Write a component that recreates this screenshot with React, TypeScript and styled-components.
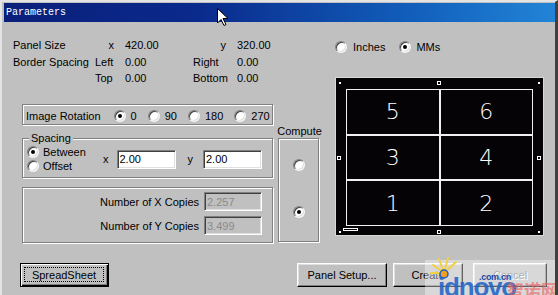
import React from 'react'
import styled, { createGlobalStyle, css } from 'styled-components'

const GlobalStyle = createGlobalStyle`
  html, body {
    margin: 0;
    padding: 0;
    background: #c0c0c0;
  }
  body {
    font-family: "Liberation Sans", Arial, sans-serif;
    font-size: 11px;
    color: #000;
  }
`

const Window = styled.div`
  position: relative;
  width: 558px;
  height: 295px;
  box-sizing: border-box;
  background: #c0c0c0;
  border-top: 2px solid #e4e4e4;
  border-left: 2px solid #e4e4e4;
  border-right: 3px solid #404040;
  overflow: hidden;
`

const TitleBar = styled.div`
  height: 19px;
  margin: 1px 0 0 2px;
  padding-left: 2px;
  display: flex;
  align-items: center;
  background: linear-gradient(to right, #0a1f7a 0%, #0a2a8c 35%, #1260bc 75%, #2284d6 100%);
  color: #fff;
  font-family: "Liberation Mono", "DejaVu Sans Mono", monospace;
  font-size: 10px;
`

const Cursor = styled.svg`
  position: absolute;
  left: 214px;
  top: 5px;
`

const Body = styled.div`
  height: 241px;
  box-sizing: border-box;
  padding: 15px 0 0 11px;
  display: grid;
  grid-template-columns: 307px 209px;
  column-gap: 15px;
  align-items: start;
`

const LeftCol = styled.div`
  display: flex;
  flex-direction: column;
`

const InfoGrid = styled.div`
  display: grid;
  grid-template-columns: 82px 30px 68px 44px 50px;
  grid-auto-rows: 16.5px;
  align-items: center;
`

const Cell = styled.span<{ $right?: boolean }>`
  white-space: nowrap;
  ${p => p.$right && css`
    justify-self: end;
    margin-right: 11px;
  `}
`

const Lower = styled.div`
  display: flex;
  gap: 5px;
  margin: 17.5px 0 0 9px;
`

const Groups = styled.div`
  width: 251px;
  display: flex;
  flex-direction: column;
`

const etched = css`
  box-sizing: border-box;
  border: 1px solid #808080;
  box-shadow: inset 1px 1px 0 #fff, 1px 1px 0 #fff;
`

const RotationGroup = styled.div`
  ${etched};
  height: 21px;
  display: flex;
  align-items: center;
  gap: 11px;
  padding: 2px 0 0 3px;
`

const RotationLabel = styled.span`
  margin-right: 2px;
`

const Group = styled.div<{ $h: number; $mt: number }>`
  ${etched};
  height: ${p => p.$h}px;
  margin-top: ${p => p.$mt}px;
`

const Legend = styled.span`
  display: table;
  margin: -7px 0 0 6px;
  padding: 0 2px;
  background: #c0c0c0;
  line-height: 13px;
`

const SpacingRow = styled.div`
  display: flex;
  align-items: center;
  padding-left: 4px;
`

const RadioStack = styled.div`
  width: 76px;
  display: flex;
  flex-direction: column;
`

const RadioItem = styled.label<{ $gap?: number; $h?: number }>`
  display: flex;
  align-items: center;
  gap: ${p => p.$gap ?? 5}px;
  height: ${p => p.$h ?? 14}px;
  white-space: nowrap;
`

const RadioDot = styled.span<{ $checked?: boolean }>`
  position: relative;
  width: 12px;
  height: 12px;
  flex: none;
  box-sizing: border-box;
  border-radius: 50%;
  border: 1px solid;
  border-color: #808080 #f4f4f4 #f4f4f4 #808080;
  background: #fff;
  box-shadow: inset 1px 1px 0 #404040, inset -1px -1px 0 #dfdfdf;
  ${p => p.$checked && css`
    &::after {
      content: '';
      position: absolute;
      left: 3px;
      top: 3px;
      width: 4px;
      height: 4px;
      border-radius: 50%;
      background: #000;
    }
  `}
`

const AxisLabel = styled.span<{ $ml: number }>`
  margin-left: ${p => p.$ml}px;
`

const Field = styled.input<{ $w: number; $h: number; $ml?: number }>`
  width: ${p => p.$w}px;
  height: ${p => p.$h}px;
  margin: 0 0 0 ${p => p.$ml ?? 0}px;
  box-sizing: border-box;
  padding: 0 0 0 2px;
  border: 1px solid;
  border-color: #808080 #fff #fff #808080;
  box-shadow: inset 1px 1px 0 #404040, inset -1px -1px 0 #dfdfdf;
  background: #fff;
  color: #000;
  font-family: "Liberation Sans", Arial, sans-serif;
  font-size: 11px;
  outline: none;
  &:disabled {
    background: #c0c0c0;
    color: #8a8a8a;
  }
`

const CopiesGrid = styled.div`
  display: grid;
  grid-template-columns: 1fr 58px;
  column-gap: 5px;
  row-gap: 5px;
  align-items: center;
  padding: 4px 10px 0 0;
  justify-items: end;
`

const ComputeCol = styled.div`
  width: 41px;
  margin-top: 21px;
  display: flex;
  flex-direction: column;
  align-items: center;
`

const ComputeLabel = styled.span`
  line-height: 13px;
  margin-left: 2px;
`

const ComputeBox = styled.div`
  ${etched};
  width: 41px;
  height: 104px;
  display: flex;
  flex-direction: column;
  align-items: center;
  gap: 35px;
  padding-top: 20px;
`

const RightCol = styled.div`
  display: flex;
  flex-direction: column;
`

const UnitRow = styled.div`
  height: 20px;
  display: flex;
  align-items: center;
  gap: 14px;
`

const Preview = styled.div`
  position: relative;
  margin-top: 20px;
  width: 209px;
  height: 159px;
  box-sizing: border-box;
  background: #050305;
  border: 1px solid #d8d8d8;
  padding: 11px 10px 9px 10px;
`

const PanelGrid = styled.div`
  width: 100%;
  height: 100%;
  display: grid;
  grid-template-columns: 1fr 1fr;
  grid-template-rows: 1fr 1fr 1fr;
`

const PanelCell = styled.div`
  border: 1px solid #f0f0f0;
  display: flex;
  align-items: center;
  justify-content: center;
  color: #fff;
  font-family: "DejaVu Sans", sans-serif;
  font-weight: 200;
  font-size: 22px;
`

const Handle = styled.span<{ $x: number; $y: number; $hollow?: boolean }>`
  position: absolute;
  left: ${p => p.$x}px;
  top: ${p => p.$y}px;
  box-sizing: border-box;
  ${p => p.$hollow ? css`
    width: 4px;
    height: 4px;
    border: 1px solid #fff;
  ` : css`
    width: 2px;
    height: 2px;
    background: #fff;
  `}
`

const ScaleBar = styled.span`
  position: absolute;
  left: 7px;
  top: 150px;
  width: 15px;
  height: 3px;
  box-sizing: border-box;
  border: 1px solid #fff;
`

const ButtonRow = styled.div`
  display: flex;
  align-items: center;
  padding-left: 18px;
`

const Button = styled.button<{ $w: number; $ml?: number; $default?: boolean; $dim?: boolean }>`
  width: ${p => p.$w}px;
  height: 24px;
  margin-left: ${p => p.$ml ?? 0}px;
  padding: 0;
  box-sizing: border-box;
  background: #c0c0c0;
  font-family: "Liberation Sans", Arial, sans-serif;
  font-size: 11px;
  color: ${p => p.$dim ? '#808080' : '#000'};
  text-shadow: ${p => p.$dim ? '1px 1px 0 #fff' : 'none'};
  display: flex;
  align-items: center;
  justify-content: center;
  ${p => p.$default ? css`
    border: 1px solid #000;
    box-shadow: inset 1px 1px 0 #fff, inset -1px -1px 0 #000, inset -2px -2px 0 #808080;
    padding: 3px 4px 4px 3px;
  ` : css`
    border: 1px solid;
    border-color: #fff #000 #000 #fff;
    box-shadow: inset -1px -1px 0 #808080, inset 1px 1px 0 #dfdfdf;
  `}
`

const FocusRing = styled.span`
  flex: 1;
  align-self: stretch;
  display: flex;
  align-items: center;
  justify-content: center;
  border: 1px dotted #000;
`

const Watermark = styled.div`
  position: absolute;
  left: 423px;
  top: 258px;
  width: 135px;
  height: 37px;
  background: rgba(255, 255, 255, 0.38);
`

const Sun = styled.svg`
  position: absolute;
  left: 2px;
  top: -4px;
`

const Brand = styled.span`
  position: absolute;
  left: 13px;
  top: 14px;
  font-family: "Liberation Sans", Arial, sans-serif;
  font-weight: bold;
  font-size: 26px;
  letter-spacing: -1.2px;
  line-height: 26px;
  color: rgba(30, 100, 200, 0.88);
`

const Domain = styled.span`
  position: absolute;
  left: 54px;
  top: 12px;
  font-family: "Liberation Sans", Arial, sans-serif;
  font-weight: bold;
  font-size: 9px;
  letter-spacing: -0.3px;
  color: #1a48a8;
`

const BrandCn = styled.span`
  position: absolute;
  left: 82px;
  top: 20px;
  font-family: "Noto Sans CJK SC", sans-serif;
  font-weight: bold;
  font-size: 17px;
  line-height: 19px;
  color: rgba(240, 90, 90, 0.62);
`

const panels = ['5', '6', '3', '4', '1', '2']

export default function App() {
  return (
    <>
      <GlobalStyle />
      <Window>
        <TitleBar>Parameters</TitleBar>
        <Cursor width="14" height="21" viewBox="0 0 14 21">
          <path d="M1.5 1.5 L1.5 16 L5 12.5 L8 18.5 L10 17.5 L7 11.5 L12 11.5 Z" fill="#fff" stroke="#000" strokeWidth="1" />
        </Cursor>
        <Body>
          <LeftCol>
            <InfoGrid>
              <Cell>Panel Size</Cell>
              <Cell $right>x</Cell>
              <Cell>420.00</Cell>
              <Cell $right>y</Cell>
              <Cell>320.00</Cell>
              <Cell>Border Spacing</Cell>
              <Cell>Left</Cell>
              <Cell>0.00</Cell>
              <Cell>Right</Cell>
              <Cell>0.00</Cell>
              <Cell />
              <Cell>Top</Cell>
              <Cell>0.00</Cell>
              <Cell>Bottom</Cell>
              <Cell>0.00</Cell>
            </InfoGrid>
            <Lower>
              <Groups>
                <RotationGroup>
                  <RotationLabel>Image Rotation</RotationLabel>
                  <RadioItem><RadioDot $checked />0</RadioItem>
                  <RadioItem><RadioDot />90</RadioItem>
                  <RadioItem><RadioDot />180</RadioItem>
                  <RadioItem><RadioDot />270</RadioItem>
                </RotationGroup>
                <Group $h={40} $mt={13}>
                  <Legend>Spacing</Legend>
                  <SpacingRow>
                    <RadioStack>
                      <RadioItem $gap={4}><RadioDot $checked />Between</RadioItem>
                      <RadioItem $gap={4}><RadioDot />Offset</RadioItem>
                    </RadioStack>
                    <AxisLabel $ml={0}>x</AxisLabel>
                    <Field $w={59} $h={19} $ml={8} readOnly value="2.00" />
                    <AxisLabel $ml={12}>y</AxisLabel>
                    <Field $w={59} $h={19} $ml={10} readOnly value="2.00" />
                  </SpacingRow>
                </Group>
                <Group $h={56} $mt={9}>
                  <CopiesGrid>
                    <span>Number of X Copies</span>
                    <Field $w={58} $h={19} disabled value="2.257" />
                    <span>Number of Y Copies</span>
                    <Field $w={58} $h={19} disabled value="3.499" />
                  </CopiesGrid>
                </Group>
              </Groups>
              <ComputeCol>
                <ComputeLabel>Compute</ComputeLabel>
                <ComputeBox>
                  <RadioDot />
                  <RadioDot $checked />
                </ComputeBox>
              </ComputeCol>
            </Lower>
          </LeftCol>
          <RightCol>
            <UnitRow>
              <RadioItem $gap={6} $h={20}><RadioDot />Inches</RadioItem>
              <RadioItem $gap={5} $h={20}><RadioDot $checked />MMs</RadioItem>
            </UnitRow>
            <Preview>
              <PanelGrid>
                {panels.map(n => <PanelCell key={n}>{n}</PanelCell>)}
              </PanelGrid>
              <Handle $x={3} $y={4} />
              <Handle $x={202} $y={4} />
              <Handle $x={3} $y={153} />
              <Handle $x={202} $y={153} />
              <Handle $hollow $x={101} $y={3} />
              <Handle $hollow $x={101} $y={152} />
              <Handle $hollow $x={1} $y={78} />
              <Handle $hollow $x={201} $y={78} />
              <ScaleBar />
            </Preview>
          </RightCol>
        </Body>
        <ButtonRow>
          <Button $w={89} $default><FocusRing>SpreadSheet</FocusRing></Button>
          <Button $w={90} $ml={188}>Panel Setup...</Button>
          <Button $w={70} $ml={6}>Create</Button>
          <Button $w={74} $ml={10} $dim>Cancel</Button>
        </ButtonRow>
        <Watermark>
          <Sun width="40" height="30" viewBox="0 0 40 30">
            <g stroke="#f2d040" strokeWidth="2" strokeLinecap="round">
              <line x1="17" y1="17" x2="6" y2="9" />
              <line x1="17" y1="17" x2="12" y2="3" />
              <line x1="17" y1="17" x2="21" y2="2" />
              <line x1="17" y1="17" x2="29" y2="6" />
              <line x1="17" y1="17" x2="4" y2="17" />
            </g>
            <circle cx="17" cy="18" r="4" fill="#f0a020" stroke="#2060c0" strokeWidth="1.5" />
          </Sun>
          <Brand>idnovo</Brand>
          <Domain>.com.cn</Domain>
          <BrandCn>智诺网</BrandCn>
        </Watermark>
      </Window>
    </>
  )
}
